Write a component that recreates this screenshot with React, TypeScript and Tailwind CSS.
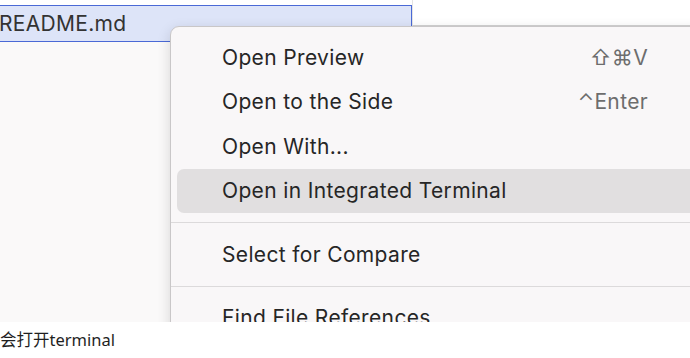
type Item = { label: string; shortcut?: string; active?: boolean };

const groups: Item[][] = [
  [
    { label: "Open Preview", shortcut: "⇧⌘V" },
    { label: "Open to the Side", shortcut: "⌃Enter" },
    { label: "Open With..." },
    { label: "Open in Integrated Terminal", active: true },
  ],
  [{ label: "Select for Compare" }],
  [{ label: "Find File References" }],
];

function MenuRow({ item }: { item: Item }) {
  return (
    <div
      className={`mx-[6px] h-[44.5px] flex items-center justify-between rounded-[7px] pl-[45px] pr-[55px] ${
        item.active ? "bg-[#e1dfe0]" : ""
      }`}
    >
      <span className="text-[#262626]">{item.label}</span>
      {item.shortcut ? <span className="text-[#6d6d6d]">{item.shortcut}</span> : null}
    </div>
  );
}

export default function App() {
  return (
    <div className="w-[690px] h-[358px] bg-white font-['Inter','Noto_Sans','DejaVu_Sans',sans-serif]">
      <div className="relative h-[322px] overflow-hidden bg-[#faf9f9]">
        <div className="flex items-start">
          <div className="w-[412px] bg-white pt-[5px]">
            <div className="h-[37px] flex items-center border-y-[1.5px] border-r-[1.5px] border-[#4a69d6] bg-[#dde4f8] text-[21px] tracking-[0.3px] text-[#333] -ml-[1px]">
              README.md
            </div>
          </div>
          <div className="flex-1 h-[26px] bg-white border-b border-[#d2d2d2] border-l border-l-[#e4e4e4]" />
        </div>

        {/* context menu */}
        <div className="absolute left-[170px] top-[26px] w-[540px] h-[340px] rounded-[9px] border border-[#c9c7c8] bg-[#f9f7f8] shadow-[0_4px_14px_rgba(0,0,0,0.14)] pt-[8px] text-[21px] tracking-[0.35px]">
          {groups.map((group, gi) => (
            <div key={gi}>
              {gi > 0 ? <div className="my-[9px] h-px bg-[#dcdadb]" /> : null}
              {group.map((item) => (
                <MenuRow key={item.label} item={item} />
              ))}
            </div>
          ))}
        </div>
      </div>
      <div className="h-[36px] flex items-center text-[16.5px] text-[#1f1f1f] font-['Noto_Sans','Noto_Sans_CJK_SC',sans-serif]">
        会打开terminal
      </div>
    </div>
  );
}
